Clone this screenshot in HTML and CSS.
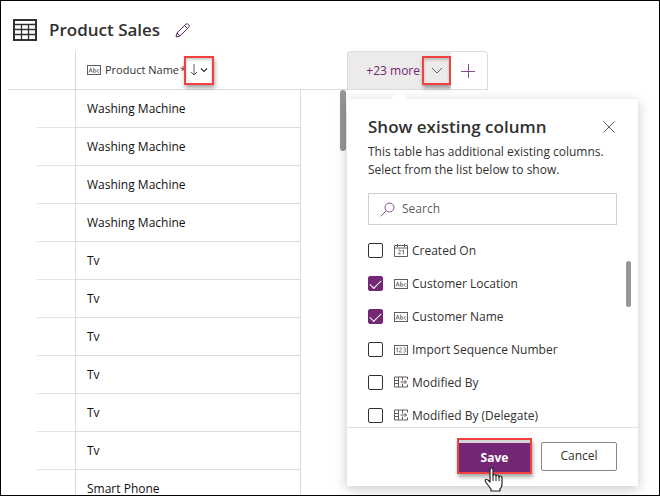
FILE: index.html
```html
<!DOCTYPE html>
<html lang="en">
<head>
<meta charset="utf-8">
<title>Product Sales</title>
<link rel="stylesheet" href="styles.css">
</head>
<body>
<svg class="defs" aria-hidden="true">
  <symbol id="abc" viewBox="0 0 14 10">
    <rect x=".5" y=".5" width="13" height="9" fill="none" stroke="currentColor"/>
    <path d="M2 7.5 3.7 3 5.4 7.5M2.6 6H4.8M6.7 2.5V7.5M6.7 5.5C7 4.2 9 4.2 9 6S7 7.8 6.7 6.6M12.3 5C10.8 4 10.2 5.2 10.2 6S11 8 12.3 7" fill="none" stroke="currentColor" stroke-width=".8"/>
  </symbol>
  <symbol id="num" viewBox="0 0 14 10">
    <rect x=".5" y=".5" width="13" height="9" fill="none" stroke="currentColor"/>
    <path d="M2.3 3.5 3.3 2.7V7.4M5.2 3.5C5.6 2.4 7.7 2.4 7.4 4 7.2 5 5.3 6 5.2 7H7.8M9.4 3C11 2.4 12 3 11.7 4 11.4 4.8 10.4 4.8 10.4 4.8S12 5 11.9 6.2C11.6 7.5 10 7.4 9.3 6.9" fill="none" stroke="currentColor" stroke-width=".8"/>
  </symbol>
  <symbol id="date" viewBox="0 0 14 13">
    <path d="M.5 1.5H13.5V12.5H.5ZM.5 4H13.5M3.5 0V3M10.5 0V3" fill="none" stroke="currentColor"/>
    <path d="M4.3 6.6C4.8 5.6 6.6 5.8 6.4 7.2 6.2 8.2 4.6 9 4.3 10H6.8M8.2 6.8 9.4 6V10.4" fill="none" stroke="currentColor" stroke-width=".9"/>
  </symbol>
  <symbol id="lookup" viewBox="0 0 14 12">
    <path d="M8 10.500H.5V.5H13.500V3M.5 4H5M.5 7H5M4.500 .5V10.500M8.500 .5V4M6.500 5.500H12.500M10.500 3.500 12.500 5.500 10.500 7.500M8.500 7V10.500H13.500V8" fill="none" stroke="currentColor"/>
  </symbol>
</svg>
<main class="app">
  <header class="page-head">
    <svg class="table-icon" viewBox="0 0 24 22" aria-hidden="true"><path d="M1 1H23V21H1Z" fill="none" stroke="#323130" stroke-width="2"/><path d="M1 5.500H23M1 10.500H23M1 15.500H23M8.500 5V21M15.500 5V21" fill="none" stroke="#323130" stroke-width="1.300"/></svg>
    <h1>Product Sales</h1>
    <button class="plain" aria-label="Edit name"><svg class="pencil" viewBox="0 0 15 15"><path d="M1 14 2 10 10.800 1.200Q12.300 .2 13.600 1.500T13.800 4.200L5 13ZM9.500 2.500 12.500 5.500M2 10 5 13" fill="none" stroke="#5b2a66"/></svg></button>
  </header>
  <div class="workspace">
    <section class="table-pane">
      <table>
        <colgroup><col class="c-gutter"><col class="c-select"><col class="c-name"><col></colgroup>
        <thead>
          <tr><th></th><th></th><th class="name" scope="col"><div class="col-head"><svg class="type-abc"><use href="#abc"/></svg><span>Product Name</span><i>*</i>
            <button class="plain sort marked" aria-label="Sort and filter"><svg viewBox="0 0 18 12"><path d="M4 0V11M1 8 4 11 7 8" fill="none" stroke="#605e5c"/><path d="M11 4.500 14 7.500 17 4.500" fill="none" stroke="#323130" stroke-width="1.200"/></svg></button></div></th><th></th></tr>
        </thead>
        <tbody>
          <tr><td></td><td></td><td>Washing Machine</td></tr>
          <tr><td></td><td></td><td>Washing Machine</td></tr>
          <tr><td></td><td></td><td>Washing Machine</td></tr>
          <tr><td></td><td></td><td>Washing Machine</td></tr>
          <tr><td></td><td></td><td>Tv</td></tr>
          <tr><td></td><td></td><td>Tv</td></tr>
          <tr><td></td><td></td><td>Tv</td></tr>
          <tr><td></td><td></td><td>Tv</td></tr>
          <tr><td></td><td></td><td>Tv</td></tr>
          <tr><td></td><td></td><td>Tv</td></tr>
          <tr><td></td><td></td><td>Smart Phone</td></tr>
        </tbody>
      </table>
      <div class="thumb table-thumb"></div>
    </section>
    <section class="side">
      <div class="tabs">
        <button class="more">+23 more<span class="marked chevron"><svg viewBox="0 0 12 7"><path d="M1 1 6 6 11 1" fill="none" stroke="#605e5c"/></svg></span></button>
        <button class="add" aria-label="New column"><svg viewBox="0 0 14 14"><path d="M0 7.500H14M7.500 0V14" fill="none" stroke="#8a4a8f"/></svg></button>
      </div>
      <form class="callout">
        <div class="callout-body">
          <div class="title"><h2>Show existing column</h2>
            <button type="button" class="plain" aria-label="Close"><svg class="close" viewBox="0 0 12 12"><path d="M.5 .5 11.500 11.500M11.500 .5 .5 11.500" fill="none" stroke="#605e5c"/></svg></button></div>
          <p>This table has additional existing columns. Select from the list below to show.</p>
          <label class="search"><svg viewBox="0 0 15 15"><circle cx="9.500" cy="5.500" r="4.500" fill="none" stroke="#8a4a8f"/><path d="M6.300 8.700 .7 14.300" stroke="#8a4a8f"/></svg><input type="search" placeholder="Search" aria-label="Search"></label>
        </div>
        <div class="list">
          <label><input type="checkbox"><svg class="icon"><use href="#date"/></svg>Created On</label>
          <label><input type="checkbox" checked><svg class="icon flat"><use href="#abc"/></svg>Customer Location</label>
          <label><input type="checkbox" checked><svg class="icon flat"><use href="#abc"/></svg>Customer Name</label>
          <label><input type="checkbox"><svg class="icon flat"><use href="#num"/></svg>Import Sequence Number</label>
          <label><input type="checkbox"><svg class="icon"><use href="#lookup"/></svg>Modified By</label>
          <label><input type="checkbox"><svg class="icon"><use href="#lookup"/></svg>Modified By (Delegate)</label>
          <div class="thumb list-thumb"></div>
        </div>
        <footer>
          <div class="save-wrap"><button type="button" class="save">Save</button>
            <svg class="pointer" viewBox="0 0 19 25" aria-hidden="true"><path d="M6 15V3Q6 1 7.500 1T9 3V9Q9 7.500 10.500 7.500T12 9.500Q12 8 13.500 8T15 10.500Q15 9 16.500 9T18 11.500V17Q18 20 16 22V24H7V22L2 15.500Q.5 13 2 12.300 3.500 12 6 15Z" fill="#fff" stroke="#222" stroke-width="1.200" stroke-linejoin="round"/><path d="M9 9V14M12 9.500V14M15 10.500V14" stroke="#222"/></svg></div>
          <button type="button" class="cancel">Cancel</button>
        </footer>
      </form>
    </section>
  </div>
</main>
</body>
</html>
```

FILE: styles.css
```css
* { box-sizing: border-box; }

body {
  margin: 0;
  background: #fff;
  color: #323130;
  font: 12px/18px "Open Sans", "Noto Sans", sans-serif;
}

button, input { font: inherit; color: inherit; }
button { cursor: pointer; }
h1, h2, p { margin: 0; }
svg { display: block; flex: none; }
.defs { position: absolute; width: 0; height: 0; }

.app {
  height: 100vh;
  border: 1px solid #000;
  overflow: hidden;
}

.plain { border: 0; padding: 0; background: none; }

.page-head {
  display: flex;
  align-items: center;
  height: 50px;
  padding: 8px 12px 0;
}
.table-icon { width: 24px; height: 22px; margin-right: 12px; }
h1 { font-size: 17px; line-height: 24px; font-weight: 600; }
.pencil { width: 15px; height: 15px; margin-left: 15px; }

.workspace { display: flex; padding: 0 21px 0 7px; }
.table-pane { position: relative; flex: 1; }

table { width: 100%; table-layout: fixed; border-collapse: separate; border-spacing: 0; }
.c-gutter { width: 29px; }
.c-select { width: 38px; }
.c-name { width: 226px; }
th {
  height: 39px;
  padding: 0;
  border-bottom: 1px solid #dcdcdc;
  font-size: 11px;
  font-weight: 400;
  text-align: left;
}
th.name { padding-left: 11px; border-left: 1px solid #dcdcdc; }
.col-head { display: flex; align-items: center; white-space: nowrap; }
.col-head i { width: 4px; margin-left: 1px; color: #a4262c; font-style: normal; }
.type-abc { width: 14px; height: 10px; margin-right: 4px; color: #605e5c; }
td { height: 38px; padding: 0; color: #111; }
td:nth-child(2) { border-bottom: 1px solid #e4e4e4; }
td:nth-child(3) {
  padding-left: 11px;
  border: solid #dcdcdc;
  border-width: 0 1px 1px;
}

.marked {
  border: 2px solid #f04040;
  box-shadow: 1px 3px 4px rgba(0, 0, 0, .35), inset 0 2px 3px rgba(0, 0, 0, .2);
}
.sort {
  display: grid;
  place-items: center;
  width: 30px;
  height: 29px;
}
.sort svg { width: 18px; height: 12px; }

.thumb { position: absolute; border-radius: 3px; background: #979797; }
.table-thumb { top: 39px; right: 1px; width: 6px; height: 61px; }

.side { width: 291px; }
.tabs { display: flex; height: 39px; }
.more {
  display: flex;
  align-items: center;
  justify-content: flex-end;
  width: 104px;
  padding: 0;
  border: 1px solid #dcdcdc;
  border-right: 0;
  border-radius: 4px 0 0 0;
  background: #edebe9;
  color: #742774;
  white-space: nowrap;
}
.chevron {
  display: grid;
  place-items: center;
  width: 29px;
  height: 29px;
  margin-left: 2px;
}
.chevron svg { width: 12px; height: 7px; }
.add {
  display: grid;
  place-items: center;
  width: 37px;
  padding: 0 2px 0 0;
  border: 1px solid #dcdcdc;
  border-left: 0;
  border-radius: 0 4px 0 0;
  background: #fff;
}
.add svg { width: 14px; height: 14px; }

.callout {
  position: relative;
  margin-top: 9px;
  background: #fff;
  box-shadow: 0 3px 12px rgba(0, 0, 0, .22);
}
.callout::before {
  content: "";
  position: absolute;
  top: -9px;
  left: 42px;
  width: 20px;
  height: 10px;
  background: #fff;
  clip-path: polygon(50% 0, 100% 100%, 0 100%);
}
.callout-body { padding: 16px 21px 8px; }
.title { display: flex; align-items: center; justify-content: space-between; padding-right: 2px; }
h2 { font-size: 17px; line-height: 24px; font-weight: 600; }
.close { width: 12px; height: 12px; }
.callout p { margin-top: 4px; }
.search {
  display: flex;
  align-items: center;
  height: 32px;
  margin-top: 14px;
  padding-left: 11px;
  border: 1px solid #d2d0ce;
}
.search svg { width: 15px; height: 15px; }
.search input { flex: 1; min-width: 0; margin-left: 7px; padding: 0; border: 0; outline: 0; background: none; }
.search input::placeholder { color: #605e5c; opacity: 1; }

.list { position: relative; height: 194px; overflow: hidden; padding: 1px 0 0 21px; }
.list label { display: flex; align-items: center; height: 33px; }
.list input {
  display: grid;
  place-items: center;
  appearance: none;
  width: 15px;
  height: 15px;
  margin: 0 11px 0 0;
  border: 1px solid #323130;
  border-radius: 2px;
}
.list input:checked { border-color: #742774; background: #742774; }
.list input:checked::before {
  content: "";
  width: 10px;
  height: 5px;
  border: solid #fff;
  border-width: 0 0 1px 1px;
  transform: translateY(-1px) rotate(-45deg);
}
.icon { width: 14px; height: 13px; margin-right: 4px; color: #605e5c; }
.icon.flat { height: 10px; }
.list-thumb { top: 28px; right: 7px; width: 5px; height: 46px; }

footer {
  display: flex;
  justify-content: flex-end;
  align-items: center;
  gap: 9px;
  height: 59px;
  padding: 0 21px 2px;
  border-top: 1px solid #e1dfdd;
}
.save-wrap {
  position: relative;
  padding-top: 3px;
  border: 2px solid #f04040;
  background: #d8d4d8;
  box-shadow: 1px 3px 4px rgba(0, 0, 0, .35);
}
.save {
  display: block;
  width: 71px;
  height: 29px;
  padding: 0;
  border: 0;
  background: #742774;
  color: #fff;
  font-weight: 700;
}
.pointer { position: absolute; left: 25px; top: 27px; width: 19px; height: 25px; }
.cancel {
  width: 76px;
  height: 29px;
  padding: 0;
  border: 1px solid #8a8886;
  border-radius: 2px;
  background: #fff;
}
```
